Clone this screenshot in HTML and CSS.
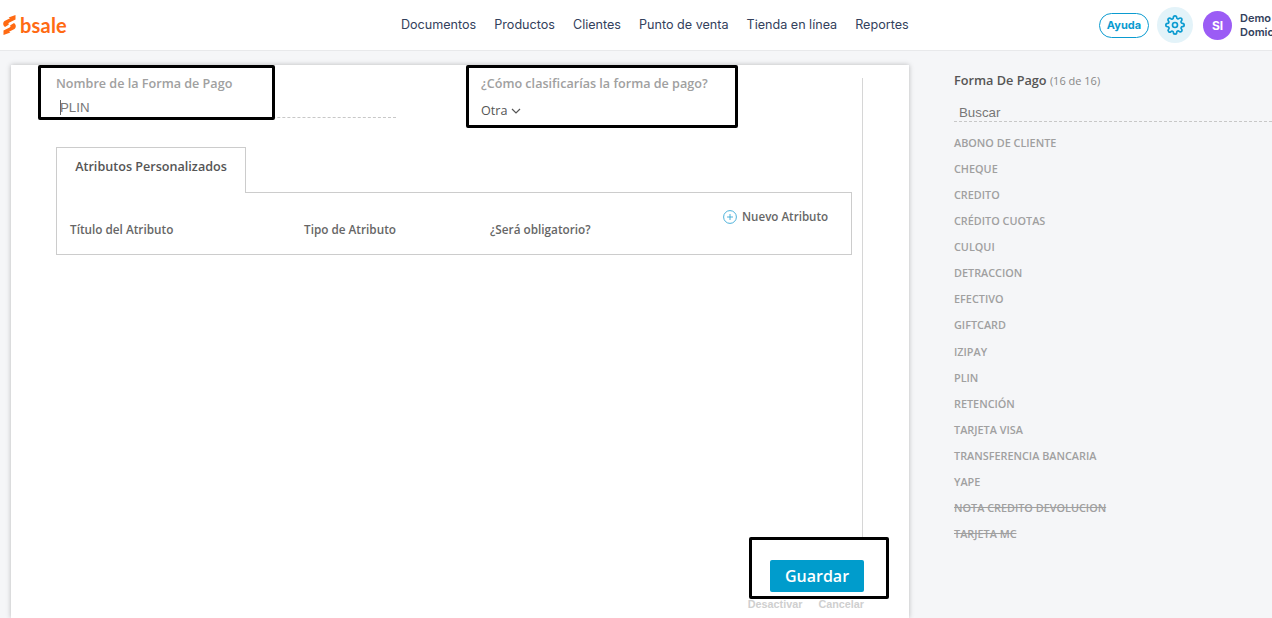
FILE: index.html
```html
<!DOCTYPE html>
<html lang="es">
<head>
  <meta charset="UTF-8" />
  <meta name="viewport" content="width=device-width, initial-scale=1.0"/>
  <title>Forma de Pago</title>
  <link rel="stylesheet" href="styles.css">
</head>
<body>
  <header class="topbar">
    <a class="logo" href="#">
      <svg class="logo-icon" viewBox="0 0 13 20" width="13" height="20">
        <path d="M12.5 0 L12.5 4.6 L6.4 7.6 C5.2 8.2 5.2 9 6 9.6 L2 12 C-0.4 10.4 -0.4 7.2 2 5.8 L7 3.2 L5.6 2.6 Z" fill="#ff6a13"/>
        <path d="M0.5 20 L0.5 15.4 L6.6 12.4 C7.8 11.8 7.8 11 7 10.4 L11 8 C13.4 9.6 13.4 12.8 11 14.2 L6 16.8 L7.4 17.4 Z" fill="#ff6a13"/>
      </svg>
      <span class="logo-text">bsale</span>
    </a>

    <nav class="nav">
      <a href="#">Documentos</a>
      <a href="#">Productos</a>
      <a href="#">Clientes</a>
      <a href="#">Punto de venta</a>
      <a href="#">Tienda en línea</a>
      <a href="#">Reportes</a>
    </nav>

    <div class="top-actions">
      <a class="help" href="#">Ayuda</a>
      <span class="gear">
        <svg viewBox="0 0 24 24" width="20" height="20" fill="none" stroke="#0b9bd0" stroke-width="2" stroke-linecap="round" stroke-linejoin="round">
          <circle cx="12" cy="12" r="3"/>
          <path d="M19.4 15a1.65 1.65 0 0 0 .33 1.82l.06.06a2 2 0 1 1-2.83 2.83l-.06-.06a1.65 1.65 0 0 0-2.82 1.17V21a2 2 0 0 1-4 0v-.09a1.65 1.65 0 0 0-2.82-1.12l-.06.06a2 2 0 1 1-2.83-2.83l.06-.06a1.65 1.65 0 0 0-1.17-2.82H3a2 2 0 0 1 0-4h.09a1.65 1.65 0 0 0 1.12-2.82l-.06-.06a2 2 0 1 1 2.83-2.83l.06.06a1.65 1.65 0 0 0 1.82.33H9a1.65 1.65 0 0 0 1-1.51V3a2 2 0 0 1 4 0v.09a1.65 1.65 0 0 0 2.82 1.12l.06-.06a2 2 0 1 1 2.83 2.83l-.06.06a1.65 1.65 0 0 0-.33 1.82V9a1.65 1.65 0 0 0 1.51 1H21a2 2 0 0 1 0 4h-.09a1.65 1.65 0 0 0-1.51 1z"/>
        </svg>
      </span>
      <span class="avatar">SI</span>
      <div class="user-name">Demo<br>Domic</div>
    </div>
  </header>

  <div class="page">
    <main class="card">
      <div class="form-col">
        <div class="fields">
          <div class="field field-name">
            <label>Nombre de la Forma de Pago</label>
            <div class="name-input"><span class="caret"></span>PLIN</div>
          </div>
          <div class="field field-type">
            <label>¿Cómo clasificarías la forma de pago?</label>
            <div class="select">
              Otra
              <svg viewBox="0 0 10 6" width="10" height="6" fill="none" stroke="#555" stroke-width="1.2"><path d="M1 1 L5 5 L9 1"/></svg>
            </div>
          </div>
        </div>

        <div class="tab">Atributos Personalizados</div>
        <div class="panel">
          <span class="col col-title">Título del Atributo</span>
          <span class="col col-kind">Tipo de Atributo</span>
          <span class="col col-req">¿Será obligatorio?</span>
          <a class="add" href="#">
            <svg viewBox="0 0 14 14" width="14" height="14" fill="none" stroke="#3aa9d6" stroke-width="0.9"><circle cx="7" cy="7" r="6.4"/><path d="M7 4 V10 M4 7 H10"/></svg>
            Nuevo Atributo
          </a>
        </div>
      </div>

      <div class="actions">
        <button class="save">Guardar</button>
        <div class="minor">
          <a href="#">Desactivar</a>
          <a href="#">Cancelar</a>
        </div>
      </div>
    </main>

    <aside class="side">
      <h2>Forma De Pago <small>(16 de 16)</small></h2>
      <div class="search">Buscar</div>
      <ul class="list">
        <li>ABONO DE CLIENTE</li>
        <li>CHEQUE</li>
        <li>CREDITO</li>
        <li>CRÉDITO CUOTAS</li>
        <li>CULQUI</li>
        <li>DETRACCION</li>
        <li>EFECTIVO</li>
        <li>GIFTCARD</li>
        <li>IZIPAY</li>
        <li>PLIN</li>
        <li>RETENCIÓN</li>
        <li>TARJETA VISA</li>
        <li>TRANSFERENCIA BANCARIA</li>
        <li>YAPE</li>
        <li class="off">NOTA CREDITO DEVOLUCION</li>
        <li class="off">TARJETA MC</li>
      </ul>
    </aside>

    <div class="mark mark-name"></div>
    <div class="mark mark-type"></div>
    <div class="mark mark-save"></div>
  </div>
</body>
</html>
```

FILE: styles.css
```css
* {
  box-sizing: border-box;
  margin: 0;
  padding: 0;
}

html, body {
  height: 618px;
  overflow: hidden;
}

body {
  font-family: "Open Sans", sans-serif;
  background: #f5f6f8;
  color: #555;
}

a {
  text-decoration: none;
  color: inherit;
}

.topbar {
  display: flex;
  align-items: center;
  height: 51px;
  background: #fff;
  border-bottom: 1px solid #e8e9eb;
}

.logo {
  display: flex;
  align-items: center;
  gap: 4px;
  margin-left: 3px;
}

.logo-text {
  font-family: "Lato", sans-serif;
  font-size: 20px;
  font-weight: 700;
  color: #ff6a13;
  letter-spacing: 0.2px;
}

.nav {
  display: flex;
  gap: 18px;
  margin-left: 334px;
  padding-bottom: 2px;
  font-family: "Inter", sans-serif;
  font-size: 12.6px;
  color: #33415c;
}

.top-actions {
  display: flex;
  align-items: center;
  margin-left: auto;
  width: 173px;
  flex-shrink: 0;
}

.help {
  width: 50px;
  height: 25px;
  line-height: 23px;
  text-align: center;
  border: 1px solid #0b9bd0;
  border-radius: 13px;
  font-family: "Inter", sans-serif;
  font-size: 11px;
  font-weight: 700;
  color: #0b9bd0;
  flex-shrink: 0;
}

.gear {
  display: flex;
  align-items: center;
  justify-content: center;
  width: 36px;
  height: 36px;
  margin-left: 8px;
  border-radius: 50%;
  background: #e3f3f9;
  flex-shrink: 0;
}

.avatar {
  width: 29px;
  height: 29px;
  line-height: 29px;
  margin-left: 10px;
  border-radius: 50%;
  background: #9b5cf5;
  color: #fff;
  text-align: center;
  font-family: "Inter", sans-serif;
  font-size: 12px;
  font-weight: 700;
  flex-shrink: 0;
}

.user-name {
  margin-left: 8px;
  font-family: "Inter", sans-serif;
  font-size: 11px;
  font-weight: 600;
  line-height: 14px;
  color: #33415c;
  white-space: nowrap;
}

.page {
  position: relative;
  display: flex;
  height: 567px;
  overflow: hidden;
}

.card {
  width: 898px;
  height: 553px;
  margin: 14px 0 0 11px;
  padding: 13px 0 0 45px;
  background: #fff;
  box-shadow: 0 0 5px rgba(0,0,0,0.25);
  flex-shrink: 0;
}

.form-col {
  width: 807px;
  height: 462px;
  border-right: 1px solid #d6d6d6;
}

.fields {
  display: flex;
  height: 69px;
}

.field label {
  display: block;
  font-size: 12.6px;
  font-weight: 600;
  line-height: 18px;
  margin-top: -3px;
  color: #a0a0a0;
}

.field-name {
  width: 340px;
  margin-right: 85px;
}

.name-input {
  display: flex;
  align-items: center;
  height: 24px;
  padding: 4px 0 0 4px;
  margin-top: 1px;
  border-bottom: 1px dashed #c8c8c8;
  font-family: "Liberation Sans", sans-serif;
  font-size: 13.3px;
  color: #777;
}

.caret {
  width: 1px;
  height: 15px;
  margin-right: -1px;
  background: #666;
}

.select {
  display: flex;
  align-items: center;
  gap: 4px;
  margin-top: 9px;
  font-size: 12.6px;
  font-weight: 500;
  line-height: 18px;
  color: #555;
}

.tab {
  width: 190px;
  height: 46px;
  padding-top: 10px;
  margin-bottom: -1px;
  position: relative;
  background: #fff;
  border: 1px solid #ccc;
  border-bottom: none;
  text-align: center;
  font-size: 12.6px;
  font-weight: 600;
  line-height: 18px;
  color: #555;
}

.panel {
  display: flex;
  align-items: flex-start;
  width: 796px;
  height: 63px;
  padding: 27px 0 0 13px;
  border: 1px solid #ccc;
  font-size: 11.75px;
  font-weight: 600;
  line-height: 18px;
  color: #666;
}

.col-title {
  width: 234px;
}

.col-kind {
  width: 186px;
}

.col-req {
  width: 233px;
}

.add {
  display: flex;
  align-items: center;
  gap: 5px;
  margin-top: -12px;
  font-size: 11.6px;
}

.actions {
  width: 807px;
  margin-top: 20px;
}

.save {
  display: block;
  width: 94px;
  height: 32px;
  margin-left: 714px;
  background: #009ccc;
  border: none;
  border-radius: 2px;
  font-family: "Open Sans", sans-serif;
  font-size: 16px;
  font-weight: 600;
  color: #fff;
}

.minor {
  display: flex;
  justify-content: flex-end;
  gap: 16px;
  margin-top: 5px;
  margin-right: -1px;
  font-family: "Liberation Sans", sans-serif;
  font-size: 10.8px;
  font-weight: 700;
  line-height: 14px;
  color: #cfcfcf;
}

.side {
  flex: 1;
  margin-left: 45px;
  padding-top: 20px;
  min-width: 0;
}

.side h2 {
  font-size: 12.7px;
  font-weight: 600;
  line-height: 18px;
  color: #555;
}

.side small {
  font-size: 11px;
  font-weight: 400;
  color: #888;
}

.search {
  height: 22px;
  margin-top: 10px;
  padding: 5px 0 0 5px;
  border-bottom: 1px dashed #c8c8c8;
  font-family: "Liberation Sans", sans-serif;
  font-size: 13.3px;
  line-height: 16px;
  color: #777;
}

.list {
  list-style: none;
  margin-top: 8px;
}

.list li {
  height: 26.07px;
  font-size: 10.85px;
  font-weight: 600;
  line-height: 26px;
  color: #a0a0a0;
}

.list .off {
  text-decoration: line-through;
}

/* black annotation boxes drawn over the form */
.mark {
  position: absolute;
  border: 3px solid #000;
  border-radius: 2px;
}

.mark-name {
  left: 38px;
  top: 14px;
  width: 237px;
  height: 55px;
}

.mark-type {
  left: 466px;
  top: 14px;
  width: 272px;
  height: 63px;
}

.mark-save {
  left: 749px;
  top: 486px;
  width: 140px;
  height: 62px;
}
```
